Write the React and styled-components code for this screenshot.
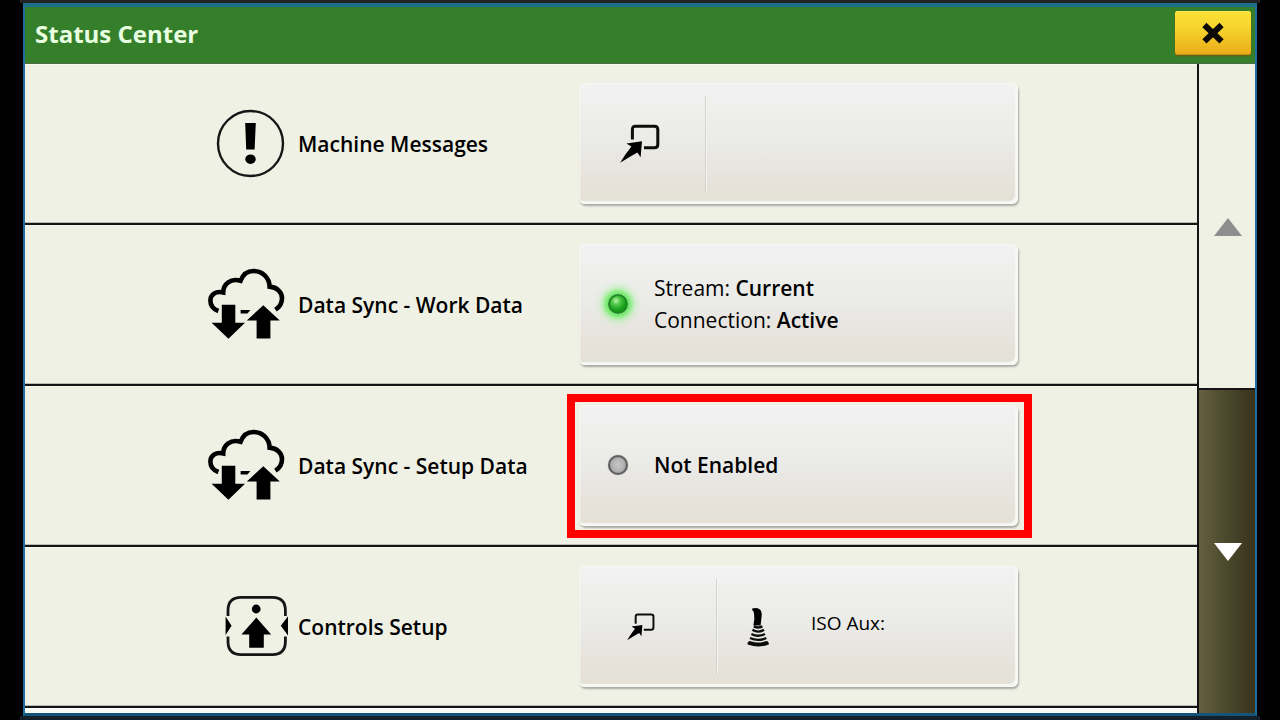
import React from "react";
import styled, { createGlobalStyle } from "styled-components";

const GlobalStyle = createGlobalStyle`
  * { box-sizing: border-box; }
  body {
    margin: 0;
    background: #000;
    font-family: "Open Sans", "Noto Sans", sans-serif;
  }
  strong { font-weight: 600; }
`;

const Screen = styled.div`
  min-height: 100vh;
  display: flex;
  margin: 0 20px;
  padding: 3px 3px 4px;
  background: linear-gradient(#232323 0 3px, #000 3px calc(100% - 4px), #14202a calc(100% - 4px));
`;

const Window = styled.div`
  flex: 1;
  min-width: 0;
  display: flex;
  flex-direction: column;
  border: 2px solid #1c6ea3;
  border-top: 4px solid #1b7189;
  border-bottom: 3px solid #145478;
`;

const TitleBar = styled.header`
  display: flex;
  align-items: center;
  justify-content: space-between;
  height: 57px;
  padding: 0 4px 4px 10px;
  background: #367f2a;
  border-bottom: 1px solid #4b6a45;
`;

const Title = styled.h1`
  margin: 0;
  padding-top: 2px;
  font-size: 24px;
  line-height: 32px;
  font-weight: 700;
  color: #e9ffe2;
`;

const CloseButton = styled.button`
  display: flex;
  align-items: center;
  justify-content: center;
  width: 76px;
  height: 44px;
  padding: 0;
  border: 0;
  border-radius: 3px;
  background: linear-gradient(#f9e135 0%, #f7d42c 40%, #e9ab19 100%);
  box-shadow: 0 1px 2px #6b5a10, inset 0 1px 0 #fbe95f, inset 0 -1px 0 #c8900f;
`;

const Body = styled.div`
  flex: 1;
  display: flex;
`;

const Content = styled.main`
  flex: 1;
  min-width: 0;
  background: #f8fbf5;
`;

const List = styled.ul`
  margin: 0;
  padding: 0;
  list-style: none;
`;

const Row = styled.li`
  display: grid;
  grid-template-columns: 273fr 281fr 439fr 179fr;
  align-items: center;
  height: 161px;
  background: #eff1e4;
  border-bottom: 2px solid #141414;
  box-shadow: inset 0 -1px 0 #b9bab2, inset 0 1px 0 #f8faf0;
`;

const IconCell = styled.div`
  display: flex;
  justify-content: flex-end;
  padding-right: 8px;
`;

const RowLabel = styled.h2`
  margin: 0;
  font-size: 21px;
  line-height: 32px;
  font-weight: 600;
  color: #000;
  white-space: nowrap;
`;

const Panel = styled.button`
  position: relative;
  display: flex;
  align-items: stretch;
  height: 121px;
  padding: 0;
  border: 0;
  border-radius: 6px;
  font: inherit;
  font-size: 21px;
  line-height: 32px;
  text-align: left;
  color: #000;
  background: linear-gradient(#f2f2f3 0%, #eeefec 25%, #eaeae7 50%, #e8e4de 72%, #e3e0d5 100%);
  box-shadow: inset -3px -3px 1px #f7f7f4, inset 1px 1px 2px #f7f7f4, 1px 2px 2px #a9aaa3;
`;

const Highlight = styled.span`
  position: absolute;
  inset: -11px -14px -12px -12px;
  border: 8px solid #ff0000;
  pointer-events: none;
`;

const ShortcutCell = styled.span`
  display: flex;
  align-items: center;
  width: ${(p) => (p.$compact ? 137 : 126)}px;
  padding-left: ${(p) => (p.$compact ? 48 : 41)}px;
`;

const Divider = styled.span`
  width: 2px;
  margin: 13px 0;
  background: linear-gradient(90deg, #d3d3ce 50%, #f4f4f2 50%);
`;

const StatusCell = styled.span`
  display: flex;
  align-items: center;
  padding-left: 29px;
  padding-bottom: 2px;
  gap: 26px;
`;

const StatusText = styled.span`
  display: flex;
  flex-direction: column;
`;

const Led = styled.span`
  width: 20px;
  height: 20px;
  border-radius: 50%;
  border: 2px solid ${(p) => (p.$on ? "#1c8a20" : "#5e5e60")};
  background: ${(p) =>
    p.$on
      ? "radial-gradient(circle at 38% 30%, #b5f5a5 0%, #4fc548 28%, #18a01c 62%, #0f8a14 100%)"
      : "radial-gradient(circle, #c6c6c6 0%, #b4b4b4 50%, #858586 100%)"};
  box-shadow: ${(p) => (p.$on ? "0 0 4px 3px #6ce766, 0 0 9px 6px #a3f39a" : "0 0 1px #8c8c8c")};
`;

const LeverCell = styled.span`
  display: flex;
  align-items: center;
  padding-left: 29px;
  gap: 42px;
`;

const LeverText = styled.span`
  padding-bottom: 7px;
  font-size: 19px;
`;

const ScrollColumn = styled.nav`
  display: flex;
  flex-direction: column;
  width: 58px;
  border-left: 2px solid #141414;
`;

const ScrollButton = styled.button`
  flex: 1;
  display: flex;
  align-items: center;
  justify-content: center;
  padding: 2px 0 0 2px;
  border: 0;
  background: ${(p) => (p.$active ? "linear-gradient(90deg, #656040 0%, #555133 30%, #464329 62%, #39321a 100%)" : "#eff1e4")};
  border-top: ${(p) => (p.$active ? "2px solid #141414" : "0")};
`;

const ExclamationIcon = () => (
  <svg width="84" height="79" viewBox="0 0 84 79" aria-hidden="true">
    <circle cx="44.5" cy="39.5" r="32.5" fill="none" stroke="#161616" strokeWidth="2.4" />
    <path d="M39.2 19H49.8L48.6 45.5H40.2Z" />
    <ellipse cx="44.5" cy="55.2" rx="5.2" ry="4.8" />
  </svg>
);

const CloudSyncIcon = () => (
  <svg width="84" height="79" viewBox="0 0 84 79" aria-hidden="true">
    <path
      d="M12.4 46C7 44 4.4 40.2 4.4 35.8C4.4 29.6 9.6 25.8 17.2 27.4C17.4 18.7 24.6 13 34.6 15.8C36.8 9.8 41.4 6 47.4 6C56.2 6 63.4 12.4 63.6 21.6C71 22 76 27.2 76 33.2C76 38 73.6 42 69.4 44.6"
      fill="none" stroke="#000" strokeWidth="4.6"
    />
    <path d="M34.6 45H44.4L41.4 48.6H34.6Z" />
    <path d="M15.8 39.8H29.3V57.8H39L22.4 73.8L5.6 57.8H15.8Z" />
    <path d="M57.3 40.2L73.8 55.4H64.4V73.6H50.6V55.4H40.8Z" />
  </svg>
);

const ControlsIcon = () => (
  <svg width="84" height="79" viewBox="0 0 84 79" aria-hidden="true">
    <path
      d="M22 29V23.5Q22 10.4 35 10.4H66.4Q79.4 10.4 79.4 23.5V29M22 49.4V54.6Q22 67.6 35 67.6H66.4Q79.4 67.6 79.4 54.6V49.4"
      fill="none" stroke="#161616" strokeWidth="2.8"
    />
    <path d="M19.6 29.6L25.6 38.8L19.6 48ZM82 29.2L74.8 38.8L82 48.4Z" />
    <circle cx="50.2" cy="22" r="4.4" />
    <path d="M50.3 30.6L65.2 47.4H57.8V60.8H43.2V47.4H35.4Z" />
  </svg>
);

const JumpIcon = ({ size, stroke }) => (
  <svg width={size} height={size} viewBox="0 0 40 40" aria-hidden="true">
    <path
      d="M12.4 15.4V5.4Q12.4 2.2 15.4 2.2H34.6Q37.8 2.2 37.8 5.4V20.6Q37.8 23.8 34.6 23.8H24"
      fill="none" stroke="#0c0c0c" strokeWidth={stroke}
    />
    <path d="M22 17.2L20.6 33.2L17.4 28.4Q10 32.4 0.2 38.8Q5 30.6 11.4 22.6L6.4 19.4Z" />
  </svg>
);

const LeverIcon = () => (
  <svg width="22" height="40" viewBox="0 0 22 40" aria-hidden="true">
    <path d="M5.2 1.6Q9 0 13 2.4Q15.2 4.6 14.6 9.5L13.6 18.6H6.4Q8 12 7 6.6Q6.8 3.6 5.2 3.2Z" />
    <path
      d="M6.8 19.4Q11 21.6 15.4 19.4M5.4 22.8Q11 26.4 17 22.8M4.4 27Q11 30.4 18 27M3 31Q11 34.8 19.4 31M1.8 36.6Q2 34.8 3.4 35.4Q11 38.2 18.8 35.4Q20.4 34.8 20.6 36.6Q11 40 1.8 36.6Z"
      fill="none" stroke="#0c0c0c" strokeWidth="2.4"
    />
  </svg>
);

const CloseIcon = () => (
  <svg width="24" height="24" viewBox="0 0 24 24" aria-hidden="true">
    <path d="M3.4 4L20.6 20.4M20.6 4L3.4 20.4" stroke="#0c0804" strokeWidth="6" />
  </svg>
);

const UpTriangle = () => (
  <svg width="28" height="18" viewBox="0 0 28 18" aria-hidden="true">
    <path d="M14 0L28 18H0Z" fill="#8e8e8e" />
  </svg>
);

const DownTriangle = () => (
  <svg width="28" height="18" viewBox="0 0 28 18" aria-hidden="true">
    <path d="M0 0H28L14 18Z" fill="#fff" />
  </svg>
);

const StatusRow = ({ icon, label, highlighted, children }) => (
  <Row>
    <IconCell>{icon}</IconCell>
    <RowLabel>{label}</RowLabel>
    <Panel type="button" aria-label={label}>
      {children}
      {highlighted && <Highlight />}
    </Panel>
  </Row>
);

export default function App() {
  return (
    <>
      <GlobalStyle />
      <Screen>
        <Window>
          <TitleBar>
            <Title>Status Center</Title>
            <CloseButton type="button" aria-label="Close">
              <CloseIcon />
            </CloseButton>
          </TitleBar>
          <Body>
            <Content>
              <List>
                <StatusRow icon={<ExclamationIcon />} label="Machine Messages">
                  <ShortcutCell>
                    <JumpIcon size={40} stroke={3} />
                  </ShortcutCell>
                  <Divider />
                </StatusRow>
                <StatusRow icon={<CloudSyncIcon />} label="Data Sync - Work Data">
                  <StatusCell>
                    <Led $on />
                    <StatusText>
                      <span>Stream: <strong>Current</strong></span>
                      <span>Connection: <strong>Active</strong></span>
                    </StatusText>
                  </StatusCell>
                </StatusRow>
                <StatusRow icon={<CloudSyncIcon />} label="Data Sync - Setup Data" highlighted>
                  <StatusCell>
                    <Led />
                    <strong>Not Enabled</strong>
                  </StatusCell>
                </StatusRow>
                <StatusRow icon={<ControlsIcon />} label="Controls Setup">
                  <ShortcutCell $compact>
                    <JumpIcon size={28} stroke={2.8} />
                  </ShortcutCell>
                  <Divider />
                  <LeverCell>
                    <LeverIcon />
                    <LeverText>ISO Aux:</LeverText>
                  </LeverCell>
                </StatusRow>
              </List>
            </Content>
            <ScrollColumn aria-label="Scroll">
              <ScrollButton type="button" aria-label="Scroll up">
                <UpTriangle />
              </ScrollButton>
              <ScrollButton type="button" aria-label="Scroll down" $active>
                <DownTriangle />
              </ScrollButton>
            </ScrollColumn>
          </Body>
        </Window>
      </Screen>
    </>
  );
}
